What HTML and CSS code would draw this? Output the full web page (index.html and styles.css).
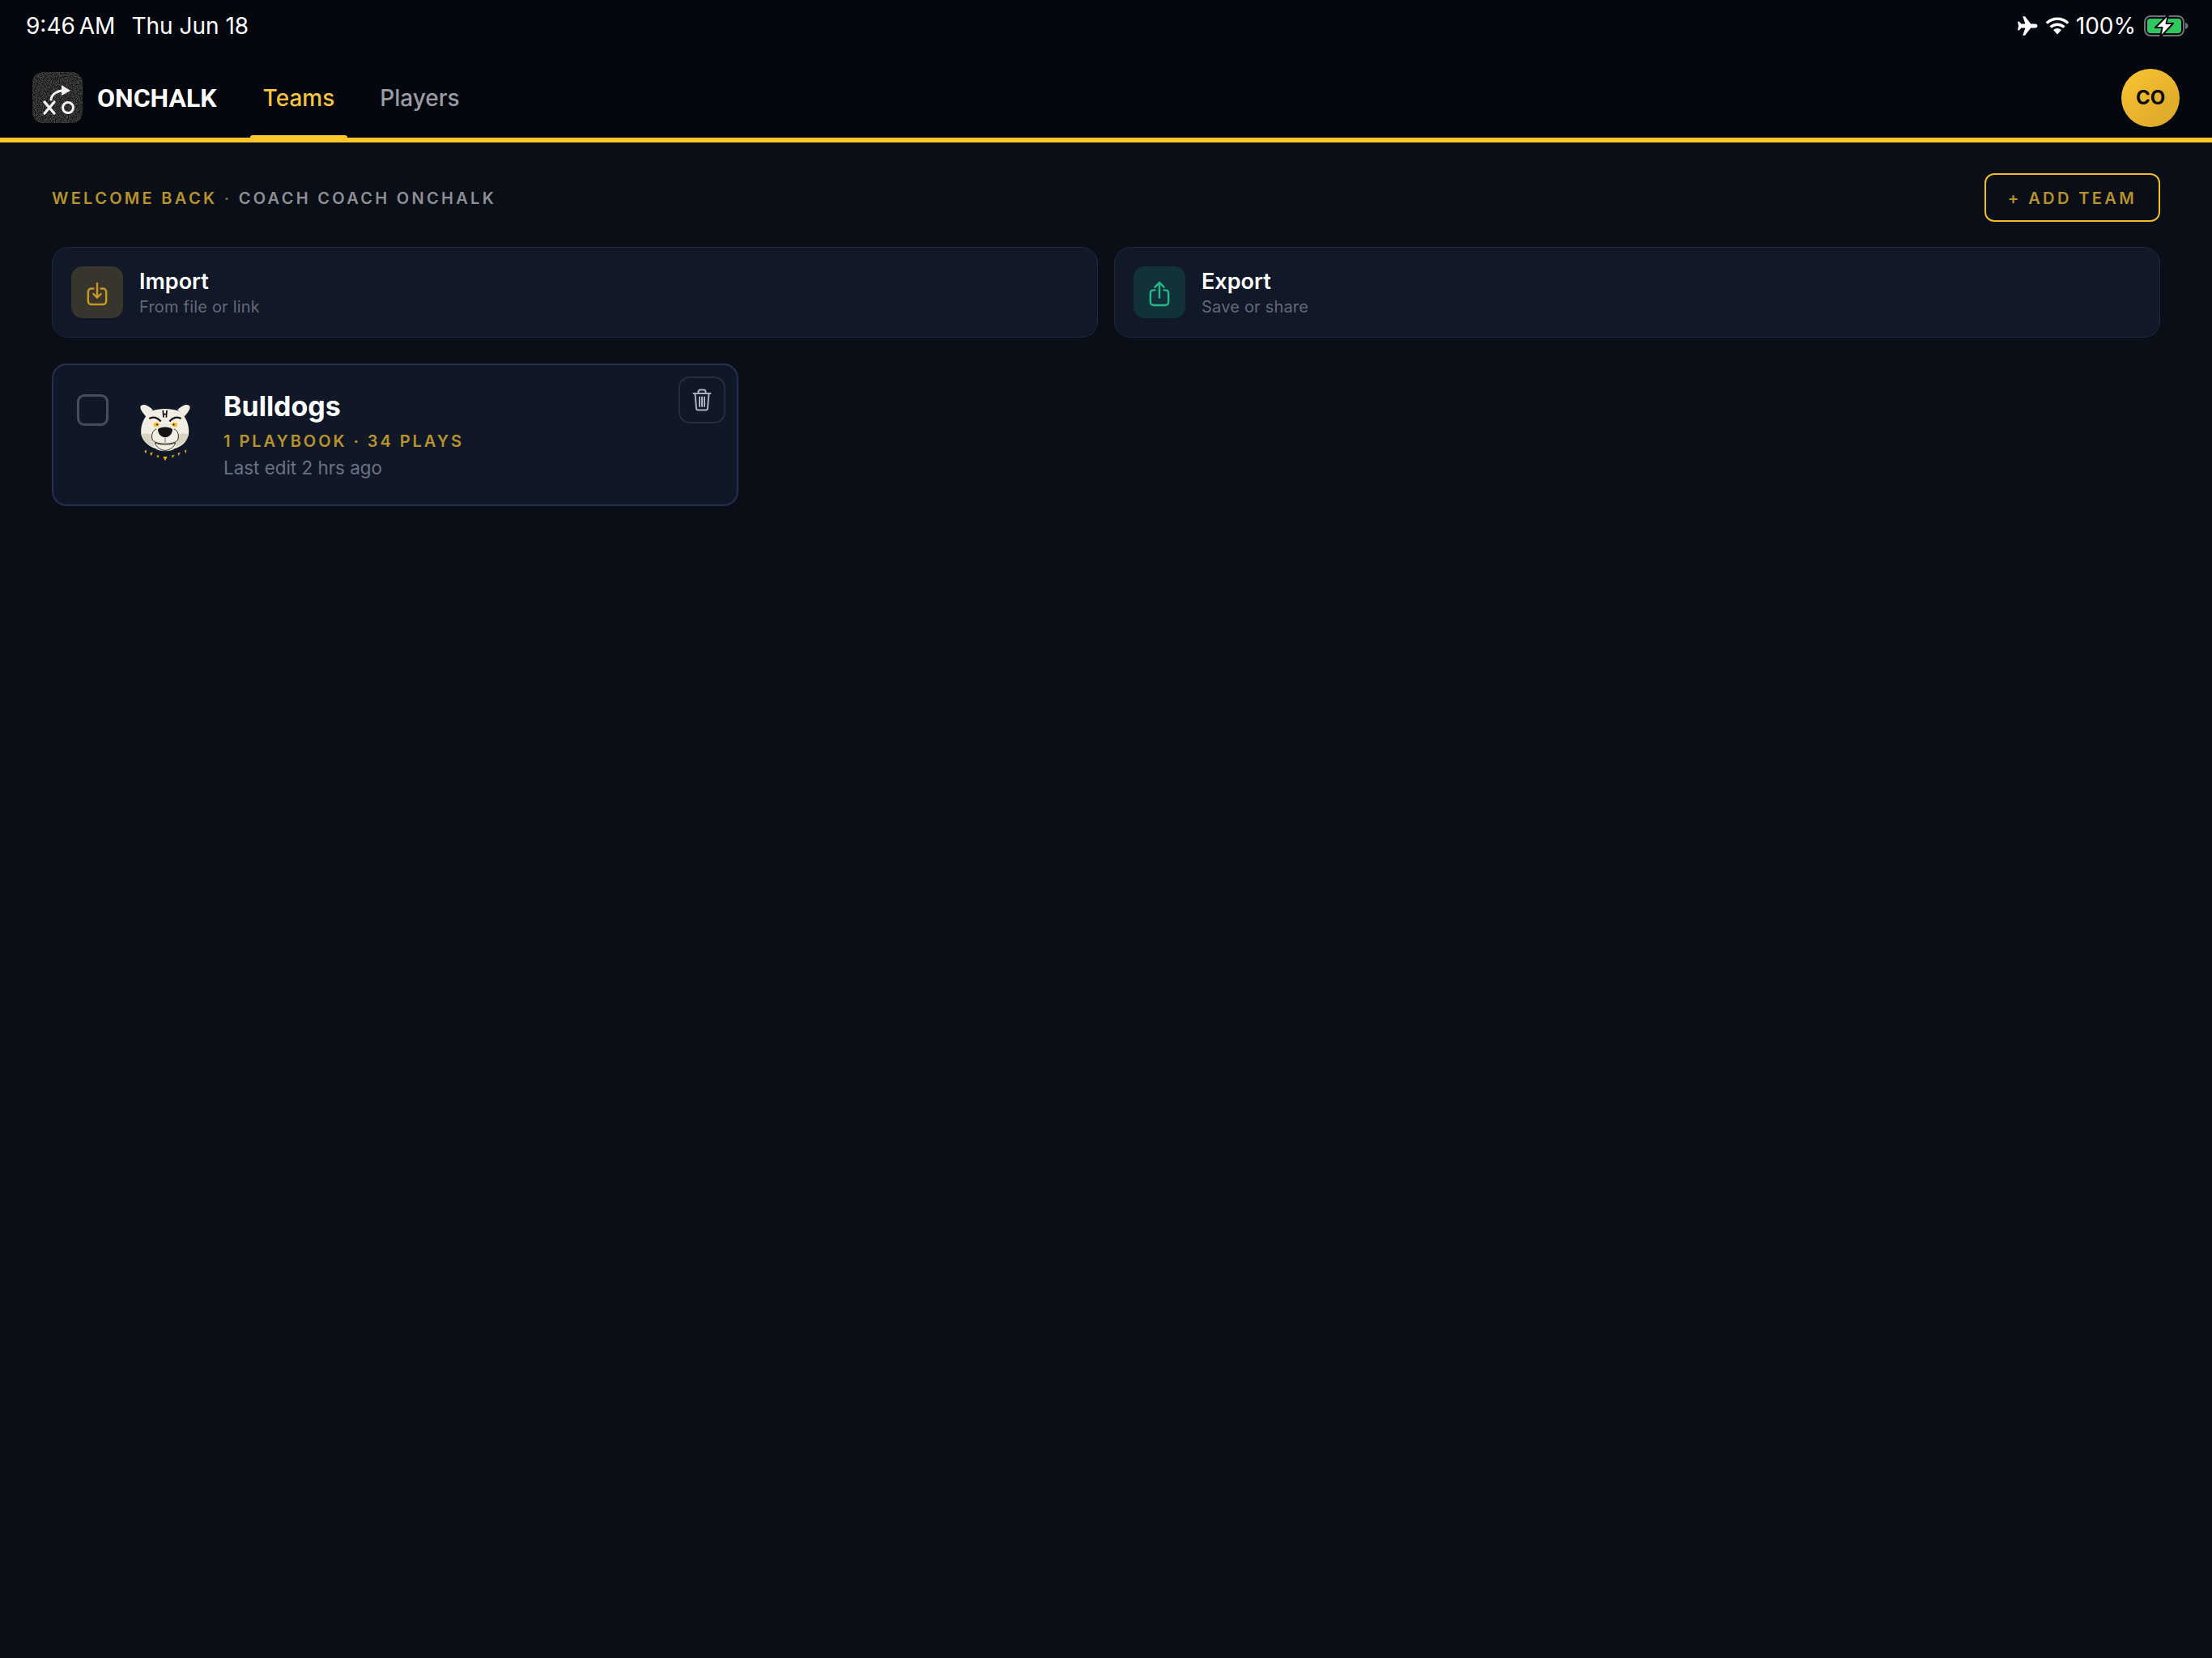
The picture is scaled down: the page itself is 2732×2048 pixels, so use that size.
FILE: index.html
```html
<!doctype html>
<html lang="en">

<head>
    <meta charset="utf-8">
    <title>OnChalk - Teams</title>
    <link rel="stylesheet" href="styles.css">
</head>

<body>
    <div class="status-bar">
        <div class="status-left">
            <span class="status-time">9:46 AM</span>
            <span>Thu Jun 18</span>
        </div>
        <div class="status-right">
            <svg class="icon-plane" viewBox="0 0 26 24">
                <path fill="#fff" d="M25.500 12c0-1.400-1.400-2.400-3-2.400h-5.200L10.400.8C10.200.4 9.900.3 9.500.3H7.200l3.200 9.300H5.300L3 6.700H.9l1.200 5.300-1.200 5.300H3l2.300-2.900h5.100L7.200 23.700h2.300c.4 0 .7-.1.9-.5l6.900-8.800h5.200c1.600 0 3-1 3-2.400z" />
            </svg>
            <svg class="icon-wifi" viewBox="0 0 30 22">
                <path fill="none" stroke="#fff" stroke-width="3.400" d="M1.800 7.600a19 19 0 0 1 26.400 0M6.600 12.600a12.200 12.200 0 0 1 16.800 0" />
                <path fill="#fff" d="M15 21.500l-5-5.400a7.200 7.200 0 0 1 10 0z" />
            </svg>
            <span class="status-pct">100%</span>
            <svg class="icon-battery" viewBox="0 0 56 28">
                <rect x="1" y="2" width="48" height="24" rx="7" fill="none" stroke="#6d7077" stroke-width="2" />
                <rect x="4" y="5" width="42" height="18" rx="4" fill="#30c85e" />
                <path d="M51 10c2.500.6 3.500 2.200 3.500 4s-1 3.400-3.500 4z" fill="#6d7077" />
                <path d="M30 0L14 16h8.500L20 28l16-17h-8.500z" fill="#fff" stroke="#05070f" stroke-width="2" stroke-linejoin="round" />
            </svg>
        </div>
    </div>

    <header class="top-nav">
        <div class="brand">
            <svg class="brand-logo" viewBox="0 0 62 63">
                <filter id="chalk">
                    <feTurbulence type="fractalNoise" baseFrequency="0.9" numOctaves="2" />
                    <feColorMatrix values="0 0 0 0 1  0 0 0 0 1  0 0 0 0 1  0.220 0 0 0 -0.090" />
                    <feComposite in2="SourceGraphic" operator="in" />
                    <feBlend in2="SourceGraphic" />
                </filter>
                <rect width="62" height="63" rx="13" fill="#171718" filter="url(#chalk)" />
                <path d="M23 34c1-7 8-11 15-11" fill="none" stroke="#f2f2f0" stroke-width="3" stroke-linecap="round" />
                <path d="M36 16l11 7-11 6z" fill="#f2f2f0" />
                <path d="M15 37l12 14M27 37L15 51" fill="none" stroke="#f2f2f0" stroke-width="3.400" stroke-linecap="round" />
                <circle cx="44" cy="44" r="6.500" fill="none" stroke="#f2f2f0" stroke-width="3" />
            </svg>
            <span class="brand-name">ONCHALK</span>
        </div>
        <nav class="tabs">
            <a class="tab tab-active">Teams</a>
            <a class="tab">Players</a>
        </nav>
        <div class="avatar">CO</div>
    </header>

    <main class="content">
        <div class="welcome-row">
            <div class="welcome">
                <span class="gold-text">WELCOME BACK</span>
                <span class="welcome-dot">·</span>
                <span>COACH COACH ONCHALK</span>
            </div>
            <button class="add-team">+ ADD TEAM</button>
        </div>

        <div class="actions">
            <div class="action-card">
                <div class="action-icon import-icon">
                    <svg viewBox="0 0 28 32" fill="none" stroke="#c99a22" stroke-width="2.600" stroke-linecap="round" stroke-linejoin="round">
                        <path d="M9 9H6a4 4 0 0 0-4 4v13a4 4 0 0 0 4 4h16a4 4 0 0 0 4-4V13a4 4 0 0 0-4-4h-3" />
                        <path d="M14 2v19M9 16l5 5 5-5" />
                    </svg>
                </div>
                <div>
                    <div class="action-title">Import</div>
                    <div class="action-sub">From file or link</div>
                </div>
            </div>
            <div class="action-card">
                <div class="action-icon export-icon">
                    <svg viewBox="0 0 28 34" fill="none" stroke="#25b88a" stroke-width="2.600" stroke-linecap="round" stroke-linejoin="round">
                        <path d="M8 12H6a4 4 0 0 0-4 4v12a4 4 0 0 0 4 4h16a4 4 0 0 0 4-4V16a4 4 0 0 0-4-4h-2" />
                        <path d="M14 22V2M8 8l6-6 6 6" />
                    </svg>
                </div>
                <div>
                    <div class="action-title">Export</div>
                    <div class="action-sub">Save or share</div>
                </div>
            </div>
        </div>

        <div class="team-grid">
            <div class="team-card">
                <div class="team-check"></div>
                <svg class="team-logo" viewBox="66 50 188 212">
                    <path d="M70 62c8-10 22-8 45 12l-25 25C80 85 68 75 70 62zM250 62c-8-10-22-8-45 12l25 25c10-14 22-24 20-37z" fill="#f2eee3" />
                    <path d="M110 78c30-10 70-10 98 0 27 17 42 52 37 87-7 30-30 45-50 50-15 13-55 13-70 0-25-7-45-25-52-50-5-35 12-70 37-87z" fill="#f2eee3" />
                    <path d="M73 165c8-6 30-6 38 0l8 44c-22-6-40-22-46-44zM245 165c-8-6-30-6-38 0l-8 44c22-6 40-22 46-44z" fill="#d9d3c2" />
                    <path d="M152 76l2 26M166 76l-2 26M153 90h12" stroke="#111" stroke-width="5" fill="none" />
                    <path d="M102 106c14-8 30-4 42 10M218 106c-14-8-30-4-42 10" stroke="#111" stroke-width="7" fill="none" />
                    <ellipse cx="128" cy="128" rx="10" ry="8" fill="#f1b91f" />
                    <ellipse cx="194" cy="128" rx="10" ry="8" fill="#f1b91f" />
                    <circle cx="131" cy="128" r="3" fill="#111" />
                    <circle cx="191" cy="128" r="3" fill="#111" />
                    <path d="M128 144c-14 6-20 22-14 40 8 10 30 14 46 14s38-4 46-14c6-18 0-34-14-40" fill="none" stroke="#111" stroke-width="2.500" />
                    <path d="M122 194c4 14 22 28 38 28s34-14 38-28c-12 6-26 6-38 6s-26 0-38-6z" fill="#f2eee3" stroke="#111" stroke-width="2.500" />
                    <path d="M134 144c8-10 44-10 52 0 2 14-10 30-26 30s-28-16-26-30z" fill="#141414" />
                    <path d="M160 174v24" stroke="#b8b3a4" stroke-width="6" />
                    <path d="M84 224l6 10 3-14zM104 232l6 10 5-14zM128 240l6 10 4-10zM152 244l8 16 8-16zM184 240l2 10 8-12zM206 232l2 10 8-13zM230 222l6 12 1-14z" fill="#e8ad13" />
                </svg>
                <div class="team-info">
                    <div class="team-name">Bulldogs</div>
                    <div class="team-meta">1 PLAYBOOK · 34 PLAYS</div>
                    <div class="team-edit">Last edit 2 hrs ago</div>
                </div>
                <button class="team-delete">
                    <svg viewBox="0 0 24 28" fill="none" stroke="#aab0bc" stroke-width="2" stroke-linecap="round" stroke-linejoin="round">
                        <path d="M1.500 6h21M7.500 6V4a2.500 2.500 0 0 1 2.500-2.500h4A2.500 2.500 0 0 1 16.500 4v2" />
                        <path d="M3.500 6l1.500 18a2.500 2.500 0 0 0 2.500 2.500h9a2.500 2.500 0 0 0 2.500-2.500l1.500-18" />
                        <path d="M9 10.500v11.500M12 10.500v11.500M15 10.500v11.500" />
                    </svg>
                </button>
            </div>
        </div>
    </main>
</body>

</html>
```

FILE: styles.css
```css
* {
    box-sizing: border-box;
}

html,
body {
    height: 100%;
}

body {
    margin: 0;
    font-family: "Inter", sans-serif;
    background: #0a0e17;
    color: #fff;
}

.status-bar {
    display: flex;
    justify-content: space-between;
    align-items: center;
    height: 64px;
    padding: 0 28px 0 32px;
    background: #05070f;
    font-size: 28px;
}

.status-left {
    display: flex;
    gap: 20px;
}

.status-time {
    word-spacing: -3px;
}

.status-right {
    display: flex;
    align-items: center;
}

.icon-plane {
    width: 26px;
    height: 24px;
    margin-right: 9px;
}

.icon-wifi {
    width: 30px;
    height: 22px;
    margin-right: 8px;
}

.icon-battery {
    width: 56px;
    height: 28px;
    margin-left: 10px;
}

.top-nav {
    display: flex;
    align-items: center;
    height: 112px;
    padding: 7px 40px 0;
    background: #05070f;
    border-bottom: 6px solid #ffc62c;
}

.brand {
    display: flex;
    align-items: center;
    gap: 18px;
}

.brand-logo {
    width: 62px;
    height: 63px;
}

.brand-name {
    font-family: "Roboto", sans-serif;
    font-size: 32px;
    font-weight: 700;
}

.tabs {
    display: flex;
    gap: 24px;
    align-self: stretch;
    margin-left: 41px;
}

.tab {
    position: relative;
    display: flex;
    align-items: center;
    padding: 0 16px;
    font-size: 28px;
    font-weight: 500;
    color: #9a9ca5;
}

.tab-active {
    color: #f5c542;
}

.tab-active::after {
    content: "";
    position: absolute;
    left: 0;
    right: 0;
    bottom: -6px;
    height: 9px;
    background: #ffc62c;
    border-radius: 3px 3px 0 0;
}

.avatar {
    display: flex;
    align-items: center;
    justify-content: center;
    width: 72px;
    height: 72px;
    margin-left: auto;
    border-radius: 50%;
    background: linear-gradient(135deg, #fbc531, #d9a42a);
    color: #0a0a0a;
    font-size: 24px;
    font-weight: 700;
}

.content {
    padding: 38px 64px 0;
}

.welcome-row {
    display: flex;
    justify-content: space-between;
    align-items: center;
    height: 60px;
}

.welcome {
    padding-top: 2px;
    font-size: 20px;
    font-weight: 600;
    letter-spacing: 3.300px;
    color: #8d8f98;
}

.gold-text {
    color: #b8922a;
}

.welcome-dot {
    color: #6d6a55;
}

.add-team {
    width: 217px;
    height: 60px;
    padding-top: 3px;
    border: 2px solid #f0bb2d;
    border-radius: 12px;
    background: transparent;
    color: #b8922a;
    font-family: "Inter", sans-serif;
    font-size: 20px;
    font-weight: 600;
    letter-spacing: 3.400px;
}

.actions {
    display: grid;
    grid-template-columns: 1fr 1fr;
    gap: 20px;
    margin-top: 31px;
}

.action-card {
    display: flex;
    align-items: center;
    gap: 20px;
    height: 112px;
    padding: 0 23px;
    border: 1.500px solid #1e2a44;
    border-radius: 20px;
    background: #111827;
}

.action-icon {
    display: flex;
    align-items: center;
    justify-content: center;
    flex: none;
    width: 64px;
    height: 64px;
    border-radius: 14px;
}

.action-icon svg {
    width: 26px;
    height: 32px;
    margin-top: 4px;
}

.import-icon {
    background: #37352d;
}

.export-icon {
    background: #12323a;
}

.action-title {
    padding-top: 2px;
    font-size: 27px;
    font-weight: 600;
    line-height: 32px;
}

.action-sub {
    margin-top: 1px;
    font-size: 20px;
    letter-spacing: 0.200px;
    line-height: 28px;
    color: #636977;
}

.team-grid {
    display: grid;
    grid-template-columns: repeat(3, 1fr);
    gap: 30px;
    margin-top: 32px;
}

.team-card {
    position: relative;
    display: flex;
    align-items: flex-start;
    height: 176px;
    padding: 36px 29px 0;
    border: 2px solid #24304f;
    border-radius: 18px;
    background: #101828;
}

.team-check {
    flex: none;
    width: 39px;
    height: 39px;
    border: 3px solid #464c5a;
    border-radius: 9px;
}

.team-logo {
    flex: none;
    width: 64px;
    height: 72px;
    margin: 11px 0 0 38px;
}

.team-info {
    margin-left: 40px;
    margin-top: -7px;
}

.team-name {
    font-size: 34px;
    font-weight: 700;
    line-height: 44px;
}

.team-meta {
    margin-top: 8px;
    font-size: 20px;
    font-weight: 600;
    letter-spacing: 2.950px;
    line-height: 26px;
    color: #b8922a;
}

.team-edit {
    margin-top: 5px;
    font-size: 22.400px;
    line-height: 30px;
    color: #6b7280;
}

.team-delete {
    position: absolute;
    top: 14px;
    right: 14px;
    display: flex;
    align-items: center;
    justify-content: center;
    width: 58px;
    height: 58px;
    padding: 0;
    border: 2px solid #262d3e;
    border-radius: 14px;
    background: transparent;
}

.team-delete svg {
    width: 24px;
    height: 28px;
}
```
